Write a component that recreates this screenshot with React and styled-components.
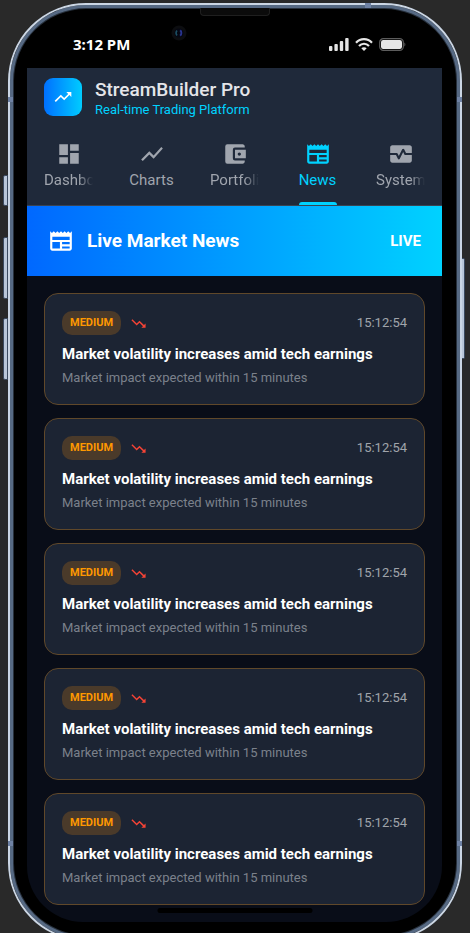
import React from "react";
import styled, { createGlobalStyle, css } from "styled-components";
import {
  MdTrendingUp,
  MdTrendingDown,
  MdDashboard,
  MdShowChart,
  MdAccountBalanceWallet,
  MdNewspaper,
  MdMonitorHeart,
} from "react-icons/md";

const GlobalStyle = createGlobalStyle`
  *, *::before, *::after { box-sizing: border-box; }
  body {
    margin: 0;
    background: #292929;
    font-family: Roboto, "Liberation Sans", sans-serif;
    color: #ffffff;
  }
  h1, h2, h3, p, ul { margin: 0; padding: 0; }
`;

const Page = styled.div`
  height: 100vh;
  overflow: hidden;
  padding: 3px 8px 0;
`;

const Phone = styled.div`
  position: relative;
  padding: 0 12px 11px 11px;
  border: 8px solid #000000;
  border-top-width: 5px;
  border-radius: 78px;
  background: #000000;
`;

const Rim = styled.div`
  position: absolute;
  inset: -5px -8px -8px;
  border: 2px solid #cbd6e4;
  border-radius: 78px;
  box-shadow: inset 0 0 0 3px #566983, inset 0 0 0 4px #27303c;
  pointer-events: none;
`;

const sideKey = css`
  position: absolute;
  border: 1px solid #3b4a5f;
  background: #b9c6d8;
`;

const LeftKey = styled.span`
  ${sideKey}
  left: -13px;
  top: ${(p) => p.$top}px;
  width: 5px;
  height: ${(p) => p.$height}px;
  border-radius: 2px 0 0 2px;
`;

const RightKey = styled.span`
  ${sideKey}
  right: -11px;
  top: 250px;
  width: 3px;
  height: 101px;
  border-width: 1px 1px 1px 0;
  border-radius: 0 2px 2px 0;
`;

const Band = styled.span`
  position: absolute;
  background: #6f82a4;
  width: ${(p) => (p.$edge === "top" ? 6 : 5)}px;
  height: 5px;
  ${(p) => p.$edge === "top" && "top: -5px; right: 83px;"}
  ${(p) => p.$edge === "left" && `left: -8px; top: ${p.$top}px;`}
  ${(p) => p.$edge === "right" && `right: -8px; top: ${p.$top}px;`}
`;

const Speaker = styled.span`
  position: absolute;
  top: 0;
  left: 50%;
  transform: translateX(-50%);
  width: 70px;
  height: 8px;
  background: #0b0b0b;
  border: 1px solid #1f1f1f;
  border-top: 0;
  border-radius: 0 0 4px 4px;
`;

const Camera = styled.svg`
  position: absolute;
  top: 17px;
  left: 155px;
`;

const StatusBar = styled.div`
  display: flex;
  align-items: center;
  justify-content: space-between;
  height: 60px;
  padding: 12px 36px 0 46px;
`;

const Clock = styled.time`
  font: 700 15px/20px "Noto Sans", "Open Sans", sans-serif;
`;

const StatusIcons = styled.div`
  display: flex;
  align-items: center;
  gap: 6px;
`;

const Screen = styled.main`
  position: relative;
  overflow: hidden;
  padding-bottom: 17px;
  background: #090d18;
  border-radius: 0 0 56px 56px;
`;

const Header = styled.header`
  background: #1f293a;
  border-bottom: 1px solid #3a4352;
`;

const Brand = styled.div`
  display: flex;
  align-items: flex-start;
  gap: 13px;
  padding: 10px 17px 0;
`;

const Logo = styled.div`
  display: grid;
  place-items: center;
  width: 38px;
  height: 38px;
  border-radius: 9px;
  background: linear-gradient(90deg, #0070ff, #00ccff);
`;

const BrandName = styled.h1`
  font-size: 19px;
  font-weight: 500;
  line-height: 24px;
  color: #e4e5e9;
`;

const Tagline = styled.p`
  font-size: 13px;
  line-height: 16px;
  color: #00d2ff;
`;

const Tabs = styled.nav`
  display: grid;
  grid-template-columns: repeat(5, 1fr);
  padding-top: 23px;
`;

const Tab = styled.button`
  display: flex;
  flex-direction: column;
  align-items: center;
  min-width: 0;
  padding: 0 17px;
  border: 0;
  background: none;
  font: 400 15px/20px Roboto, sans-serif;
  color: ${(p) => (p.$active ? "#00d2ff" : "#a0a5ae")};
  cursor: pointer;

  &::after {
    content: "";
    width: 38px;
    height: 3px;
    margin-top: 12px;
    border-radius: 3px 3px 0 0;
    background: ${(p) => (p.$active ? "#00d2ff" : "transparent")};
  }
`;

const TabLabel = styled.span`
  max-width: 100%;
  margin-top: 3px;
  overflow: hidden;
  white-space: nowrap;
  ${(p) => p.$fade && "mask-image: linear-gradient(90deg, #000 70%, transparent);"}
`;

const Banner = styled.div`
  display: flex;
  align-items: center;
  gap: 13px;
  height: 70px;
  padding: 0 21px;
  background: linear-gradient(90deg, #0068ff, #00d2ff);
`;

const BannerTitle = styled.h2`
  flex: 1;
  font-size: 19px;
  font-weight: 700;
  line-height: 24px;
`;

const Live = styled.span`
  font-size: 15px;
  font-weight: 700;
  line-height: 20px;
`;

const Feed = styled.ul`
  display: grid;
  gap: 13px;
  padding: 17px 17px 0;
  list-style: none;
`;

const Card = styled.li`
  padding: 17px;
  border: 1px solid #60482a;
  border-radius: 14px;
  background: #1c2433;
`;

const CardTop = styled.div`
  display: flex;
  align-items: center;
  gap: 9px;
`;

const Badge = styled.span`
  padding: 0 8px;
  border-radius: 10px;
  background: #4a3a2a;
  color: #ff9800;
  font-size: 11px;
  font-weight: 700;
  line-height: 24px;
`;

const Stamp = styled.time`
  margin-left: auto;
  font-size: 13px;
  line-height: 20px;
  color: #a0a4ab;
`;

const Headline = styled.h3`
  margin-top: 9px;
  font-size: 15px;
  font-weight: 700;
  line-height: 20px;
  white-space: nowrap;
`;

const Detail = styled.p`
  margin-top: 5px;
  font-size: 13px;
  line-height: 18px;
  color: #7b818b;
  white-space: nowrap;
`;

const HomeBar = styled.span`
  position: absolute;
  bottom: 9px;
  left: 50%;
  transform: translateX(-50%);
  width: 155px;
  height: 5px;
  border-radius: 3px;
  background: #000000;
`;

const tabs = [
  { label: "Dashboard", Icon: MdDashboard, fade: true },
  { label: "Charts", Icon: MdShowChart },
  { label: "Portfolio", Icon: MdAccountBalanceWallet, fade: true },
  { label: "News", Icon: MdNewspaper, active: true },
  { label: "System", Icon: MdMonitorHeart, fade: true },
];

const news = Array.from({ length: 5 }, (_, id) => ({
  id,
  impact: "MEDIUM",
  time: "15:12:54",
  title: "Market volatility increases amid tech earnings",
  detail: "Market impact expected within 15 minutes",
}));

function SignalIcon() {
  return (
    <svg width="20" height="13" viewBox="0 0 20 13" fill="#e6e6e6" aria-hidden="true">
      <rect x="0" y="8" width="3.4" height="5" rx="1" />
      <rect x="5.4" y="6" width="3.4" height="7" rx="1" />
      <rect x="10.8" y="3" width="3.4" height="10" rx="1" />
      <rect x="16.2" y="0" width="3.4" height="13" rx="1" />
    </svg>
  );
}

function WifiIcon() {
  return (
    <svg width="18" height="13" viewBox="0 0 18 13" fill="none" stroke="#e6e6e6" strokeWidth="2.2" aria-hidden="true">
      <path d="M1 4.8C5.4 0 12.600 0 17 4.800" />
      <path d="M4 8C6.800 5 11.200 5 14 8" />
      <path d="M6.300 10.300C7.800 8.800 10.200 8.800 11.700 10.300L9 13Z" fill="#e6e6e6" stroke="none" />
    </svg>
  );
}

function BatteryIcon() {
  return (
    <svg width="27" height="13" viewBox="0 0 27 13" aria-hidden="true">
      <rect x=".7" y=".7" width="23.600" height="11.600" rx="3.600" fill="none" stroke="#5c5c5c" strokeWidth="1.200" />
      <rect x="2" y="2" width="21" height="9" rx="2.200" fill="#e6e6e6" />
      <path d="M25.400 4.500c1.300.6 1.300 3.400 0 4z" fill="#5c5c5c" />
    </svg>
  );
}

export default function App() {
  return (
    <>
      <GlobalStyle />
      <Page>
        <Phone>
          <Rim />
          <LeftKey $top={167} $height={31} />
          <LeftKey $top={229} $height={62} />
          <LeftKey $top={310} $height={62} />
          <RightKey />
          <Band $edge="top" />
          <Band $edge="left" $top={89} />
          <Band $edge="right" $top={89} />
          <Band $edge="left" $top={833} />
          <Band $edge="right" $top={833} />
          <Speaker />
          <Camera width="16" height="16" viewBox="0 0 16 16" aria-hidden="true">
            <circle cx="8" cy="8" r="7.500" fill="#0c0d10" />
            <circle cx="8" cy="8" r="4.500" fill="#050712" />
            <path d="M6 5.500a4 4 0 0 0 0 5" stroke="#1c4f63" strokeWidth="1.500" fill="none" />
            <path d="M9.200 5.200a4 4 0 0 1 0 5.500" stroke="#29348f" strokeWidth="2" fill="none" />
          </Camera>
          <StatusBar>
            <Clock>3:12 PM</Clock>
            <StatusIcons>
              <SignalIcon />
              <WifiIcon />
              <BatteryIcon />
            </StatusIcons>
          </StatusBar>
          <Screen>
            <Header>
              <Brand>
                <Logo>
                  <MdTrendingUp size={20} />
                </Logo>
                <div>
                  <BrandName>StreamBuilder Pro</BrandName>
                  <Tagline>Real-time Trading Platform</Tagline>
                </div>
              </Brand>
              <Tabs>
                {tabs.map(({ label, Icon, active, fade }) => (
                  <Tab key={label} type="button" $active={active} aria-current={active ? "page" : undefined}>
                    <Icon size={26} />
                    <TabLabel $fade={fade}>{label}</TabLabel>
                  </Tab>
                ))}
              </Tabs>
            </Header>
            <Banner>
              <MdNewspaper size={26} />
              <BannerTitle>Live Market News</BannerTitle>
              <Live>LIVE</Live>
            </Banner>
            <Feed>
              {news.map((item) => (
                <Card key={item.id}>
                  <CardTop>
                    <Badge>{item.impact}</Badge>
                    <MdTrendingDown size={17} color="#f44336" />
                    <Stamp>{item.time}</Stamp>
                  </CardTop>
                  <Headline>{item.title}</Headline>
                  <Detail>{item.detail}</Detail>
                </Card>
              ))}
            </Feed>
            <HomeBar />
          </Screen>
        </Phone>
      </Page>
    </>
  );
}
